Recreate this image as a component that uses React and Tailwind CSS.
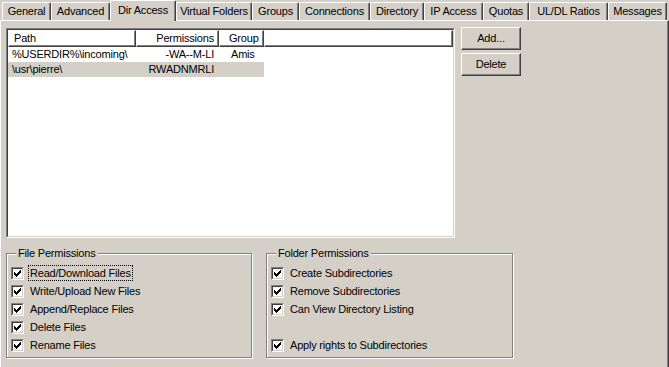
import React from 'react'

const tabs = [
  { label: 'General', w: 'w-[49px]' },
  { label: 'Advanced', w: 'w-[59px]' },
  { label: 'Dir Access', w: 'w-[66px]', active: true },
  { label: 'Virtual Folders', w: 'w-[76px]' },
  { label: 'Groups', w: 'w-[47px]' },
  { label: 'Connections', w: 'w-[71px]' },
  { label: 'Directory', w: 'w-[54px]' },
  { label: 'IP Access', w: 'w-[59px]' },
  { label: 'Quotas', w: 'w-[46px]' },
  { label: 'UL/DL Ratios', w: 'w-[79px]' },
  { label: 'Messages', w: 'w-[59px]' },
]

const rows = [
  { path: '%USERDIR%\\incoming\\', perms: '-WA--M-LI', group: 'Amis' },
  { path: '\\usr\\pierre\\', perms: 'RWADNMRLI', group: '', selected: true },
]

// windows style tick, drawn pixel by pixel
const CheckMark = () => {
  const tops = [3, 4, 5, 4, 3, 2, 1]
  return (
    <svg width="9" height="9" viewBox="0 0 9 9" shapeRendering="crispEdges">
      {tops.map((t, i) => (
        <rect key={i} x={i + 1} y={t} width="1" height="3" fill="#000" />
      ))}
    </svg>
  )
}

const CheckBox = ({ label, focused }) => (
  <div className="flex h-[18px] items-center">
    <div className="w-[13px] h-[13px] border border-t-[#808080] border-l-[#808080] border-r-white border-b-white">
      <div className="w-[11px] h-[11px] border border-t-[#404040] border-l-[#404040] border-r-[#d4d0c8] border-b-[#d4d0c8] bg-white">
        <CheckMark />
      </div>
    </div>
    <span
      className={
        'ml-[4px] px-[1px] leading-[14px] border ' +
        (focused ? 'border-dotted border-black' : 'border-transparent')
      }
    >
      {label}
    </span>
  </div>
)

const GroupBox = ({ title, className, children }) => (
  <div className={'relative border border-[#808080] shadow-[1px_1px_0_#fff,inset_1px_1px_0_#fff] ' + className}>
    <div className="absolute left-[9px] top-[-8px] px-[2px] bg-[#d4d0c8] leading-[14px]">{title}</div>
    <div className="flex flex-col pt-[10px] pl-[4px]">{children}</div>
  </div>
)

const Button = ({ children }) => (
  <div className="h-[23px] w-[60px] flex items-center justify-center border border-t-white border-l-white border-r-[#404040] border-b-[#404040] shadow-[inset_-1px_-1px_0_#808080]">
    {children}
  </div>
)

const HeaderCell = ({ className, children }) => (
  <div className={'h-[17px] flex items-center border border-t-white border-l-white border-r-[#404040] border-b-[#404040] shadow-[inset_-1px_-1px_0_#808080] ' + className}>
    {children}
  </div>
)

export default function App() {
  return (
    <div className="w-[669px] h-[367px] overflow-hidden bg-[#d4d0c8] text-black text-[11px] tracking-[-0.2px] font-['Liberation_Sans',Arial,sans-serif]">
      {/* tab strip */}
      <div className="flex items-end h-[20px] pl-[2px]">
        {tabs.map((t) =>
          t.active ? (
            <div
              key={t.label}
              className={t.w + ' relative z-10 h-[21px] -mb-px pb-[2px] flex items-center justify-center bg-[#d4d0c8] border-t border-l border-white border-r border-r-[#404040] rounded-t-[2px] shadow-[inset_-1px_0_0_#808080]'}
            >
              {t.label}
            </div>
          ) : (
            <div
              key={t.label}
              className={t.w + ' h-[18px] flex items-center justify-center border-t border-l border-white border-r border-r-[#404040] rounded-t-[2px] shadow-[inset_-1px_0_0_#808080]'}
            >
              {t.label}
            </div>
          )
        )}
      </div>

      {/* tab page */}
      <div className="h-[347px] border-t border-l border-white border-r border-r-[#404040] shadow-[inset_-1px_0_0_#808080] pt-[7px] pl-[5px]">
        <div className="flex gap-[6px]">
          {/* list view */}
          <div className="w-[449px] h-[210px] border border-t-[#808080] border-l-[#808080] border-r-white border-b-white">
            <div className="h-full border border-t-[#404040] border-l-[#404040] border-r-[#d4d0c8] border-b-[#d4d0c8] bg-white">
              <div className="flex">
                <HeaderCell className="w-[128px] pl-[5px]">Path</HeaderCell>
                <HeaderCell className="w-[83px] justify-end pr-[4px]">Permissions</HeaderCell>
                <HeaderCell className="w-[45px] pl-[9px]">Group</HeaderCell>
                <HeaderCell className="flex-1" />
              </div>
              {rows.map((r) => (
                <div key={r.path} className={'flex h-[15px] items-center w-[256px] ' + (r.selected ? 'bg-[#d4d0c8]' : '')}>
                  <div className="w-[128px] pl-[4px] whitespace-nowrap">{r.path}</div>
                  <div className="w-[83px] text-right pr-[5px]">{r.perms}</div>
                  <div className="w-[45px] pl-[12px]">{r.group}</div>
                </div>
              ))}
            </div>
          </div>

          <div className="flex flex-col gap-[3px] -mt-px">
            <Button>Add...</Button>
            <Button>Delete</Button>
          </div>
        </div>

        <div className="flex gap-[14px] mt-[15px]">
          <GroupBox title="File Permissions" className="w-[246px] h-[105px]">
            <CheckBox label="Read/Download Files" focused />
            <CheckBox label="Write/Upload New Files" />
            <CheckBox label="Append/Replace Files" />
            <CheckBox label="Delete Files" />
            <CheckBox label="Rename Files" />
          </GroupBox>
          <GroupBox title="Folder Permissions" className="w-[247px] h-[105px]">
            <CheckBox label="Create Subdirectories" />
            <CheckBox label="Remove Subdirectories" />
            <CheckBox label="Can View Directory Listing" />
            <div className="h-[18px]" />
            <CheckBox label="Apply rights to Subdirectories" />
          </GroupBox>
        </div>
      </div>
    </div>
  )
}
